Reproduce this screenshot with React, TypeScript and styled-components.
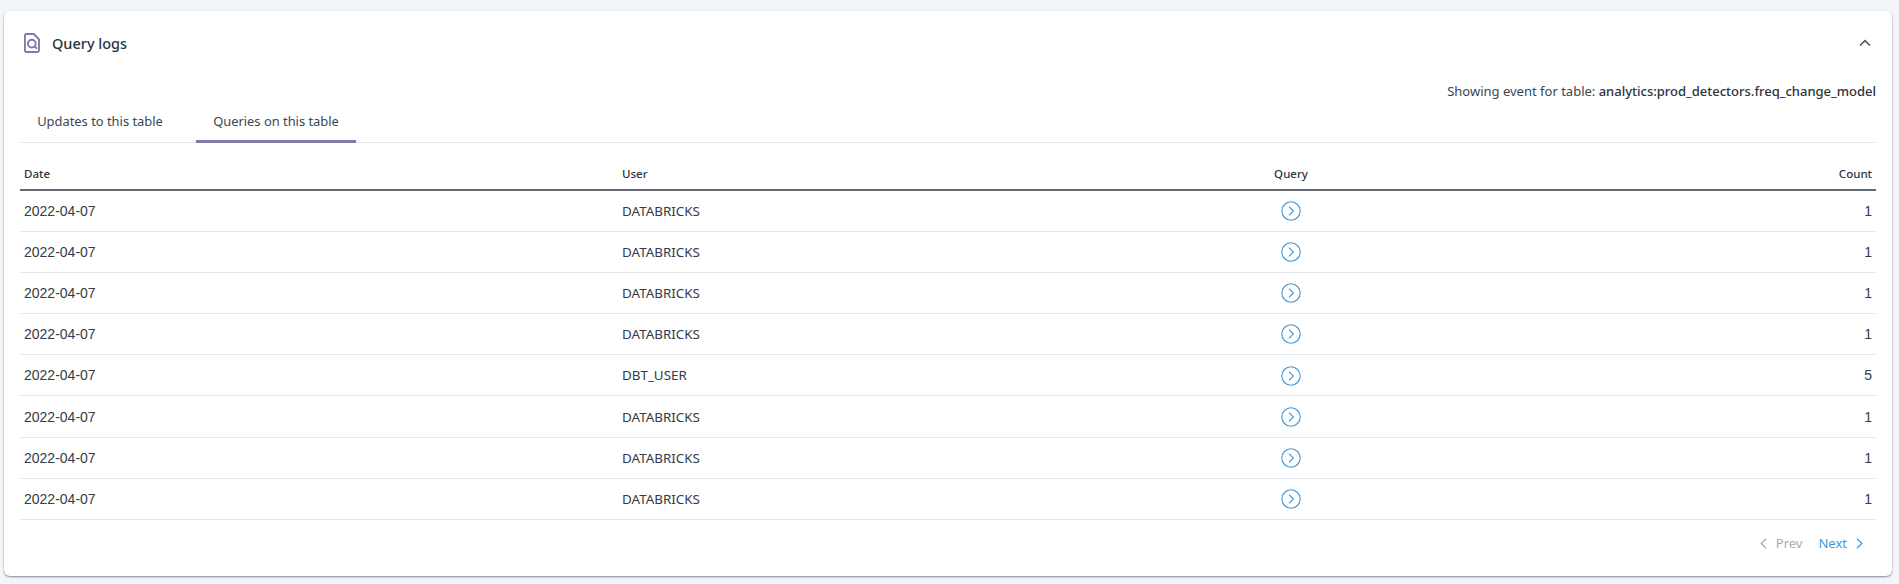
import * as React from 'react';
import styled, { createGlobalStyle } from 'styled-components';

const GlobalStyle = createGlobalStyle`
  html, body {
    margin: 0;
    background: #f1f5f9;
  }
  body {
    font-family: "Noto Sans", "Liberation Sans", sans-serif;
    color: #2b3440;
  }
`;

const Page = styled.div`
  height: 584px;
  box-sizing: border-box;
  padding: 11px 7px 8px 4px;
`;

const Card = styled.section`
  height: 100%;
  box-sizing: border-box;
  background: #fff;
  border-radius: 6px;
  box-shadow: 0 1px 2px rgba(40, 50, 60, 0.55);
  padding: 0 16px;
`;

const Header = styled.header`
  height: 64px;
  display: flex;
  align-items: center;
  justify-content: space-between;
`;

const Title = styled.div`
  display: flex;
  align-items: center;
  gap: 12px;
  padding: 0 0 1px 4px;
  font-size: 14.5px;
  font-weight: 500;
  color: #2b3440;
`;

const Collapse = styled.button`
  display: flex;
  border: 0;
  padding: 0;
  margin-right: 5px;
  background: none;
  color: #4a5560;
`;

const Source = styled.div`
  height: 18px;
  line-height: 18px;
  margin-top: 7px;
  text-align: right;
  font-size: 13px;
  color: #3b4652;

  b {
    font-weight: 500;
    color: #2b3440;
  }
`;

const Tabs = styled.div`
  display: flex;
  height: 47px;
  margin-top: -4px;
  box-sizing: border-box;
  border-bottom: 1px solid #e4e7eb;
`;

const Tab = styled.div<{ $active?: boolean }>`
  width: 160px;
  margin-right: ${props => (props.$active ? '0' : '16px')};
  display: flex;
  align-items: center;
  justify-content: center;
  box-sizing: border-box;
  height: 47px;
  padding-top: 5px;
  font-size: 12.9px;
  color: #3b4652;
  border-bottom: 3px solid ${props => (props.$active ? '#8577a6' : 'transparent')};
`;

const Table = styled.table`
  width: 100%;
  margin-top: 16px;
  border-collapse: collapse;
  table-layout: fixed;
`;

const HeadCell = styled.th<{ $align?: string; $width?: string }>`
  width: ${props => props.$width || 'auto'};
  height: 31px;
  padding: 0 4px 1px;
  box-sizing: border-box;
  border-bottom: 2px solid #5f6973;
  text-align: ${props => props.$align || 'left'};
  font-size: 11.5px;
  font-weight: 500;
  color: #2b3440;
`;

const Cell = styled.td<{ $align?: string; $numeric?: boolean }>`
  height: 41.2px;
  padding: 0 4px;
  box-sizing: border-box;
  border-bottom: 1px solid #e4e7eb;
  text-align: ${props => props.$align || 'left'};
  font-family: ${props => (props.$numeric ? '"Liberation Sans", Arial, sans-serif' : '"Noto Sans", sans-serif')};
  font-size: ${props => (props.$numeric ? '14px' : '13.4px')};
  color: #333c47;
`;

const OpenQuery = styled.button`
  display: inline-flex;
  vertical-align: middle;
  border: 0;
  padding: 0;
  background: none;
  color: #3f97d8;
`;

const Pager = styled.nav`
  display: flex;
  justify-content: flex-end;
  align-items: center;
  height: 46px;
  padding-right: 13px;
  font-size: 13px;
`;

const PageLink = styled.span<{ $disabled?: boolean }>`
  display: flex;
  align-items: center;
  gap: 9px;
  margin-left: 16px;
  color: ${props => (props.$disabled ? '#a3abb3' : '#3f97d8')};
`;

const FileSearchIcon = () => (
  <svg width="16" height="20" viewBox="0 0 16 20" fill="none" stroke="#8577a6" strokeWidth="1.9">
    <path d="M2.6 1h7.2L15 6.4v10.8A1.8 1.8 0 0 1 13.2 19H2.6A1.8 1.8 0 0 1 .9 17.2V2.8A1.8 1.8 0 0 1 2.6 1Z" />
    <circle cx="7.8" cy="10.6" r="3.9" />
    <path d="M10.5 13.4 13 15.8" />
  </svg>
);

const ChevronUp = () => (
  <svg width="12" height="8" viewBox="0 0 12 8" fill="none" stroke="currentColor" strokeWidth="1.5">
    <path d="M1 6.5 6 1.6l5 4.9" />
  </svg>
);

const ChevronSide = ({ left }: { left?: boolean }) => (
  <svg width="7" height="11" viewBox="0 0 7 11" fill="none" stroke="currentColor" strokeWidth="1.2">
    <path d={left ? 'M6 .8 1.2 5.5 6 10.2' : 'M1 .8l4.8 4.7L1 10.2'} />
  </svg>
);

const CircleArrow = () => (
  <svg width="20" height="20" viewBox="0 0 20 20" fill="none" stroke="currentColor" strokeWidth="1.1">
    <circle cx="10" cy="10" r="9.2" />
    <path d="M8 5.6 12.4 10 8 14.4" />
  </svg>
);

const rows = [
  { date: '2022-04-07', user: 'DATABRICKS', count: 1 },
  { date: '2022-04-07', user: 'DATABRICKS', count: 1 },
  { date: '2022-04-07', user: 'DATABRICKS', count: 1 },
  { date: '2022-04-07', user: 'DATABRICKS', count: 1 },
  { date: '2022-04-07', user: 'DBT_USER', count: 5 },
  { date: '2022-04-07', user: 'DATABRICKS', count: 1 },
  { date: '2022-04-07', user: 'DATABRICKS', count: 1 },
  { date: '2022-04-07', user: 'DATABRICKS', count: 1 },
];

export default function App() {
  return (
    <Page>
      <GlobalStyle />
      <Card>
        <Header>
          <Title>
            <FileSearchIcon />
            Query logs
          </Title>
          <Collapse aria-label="Collapse">
            <ChevronUp />
          </Collapse>
        </Header>
        <Source>
          Showing event for table: <b>analytics:prod_detectors.freq_change_model</b>
        </Source>
        <Tabs>
          <Tab>Updates to this table</Tab>
          <Tab $active>Queries on this table</Tab>
        </Tabs>
        <Table>
          <thead>
            <tr>
              <HeadCell $width="598px">Date</HeadCell>
              <HeadCell $width="598px">User</HeadCell>
              <HeadCell $width="150px" $align="center">Query</HeadCell>
              <HeadCell $align="right">Count</HeadCell>
            </tr>
          </thead>
          <tbody>
            {rows.map((row, i) => (
              <tr key={i}>
                <Cell $numeric>{row.date}</Cell>
                <Cell>{row.user}</Cell>
                <Cell $align="center">
                  <OpenQuery aria-label="Open query">
                    <CircleArrow />
                  </OpenQuery>
                </Cell>
                <Cell $numeric $align="right">{row.count}</Cell>
              </tr>
            ))}
          </tbody>
        </Table>
        <Pager>
          <PageLink $disabled>
            <ChevronSide left />
            Prev
          </PageLink>
          <PageLink>
            Next
            <ChevronSide />
          </PageLink>
        </Pager>
      </Card>
    </Page>
  );
}
